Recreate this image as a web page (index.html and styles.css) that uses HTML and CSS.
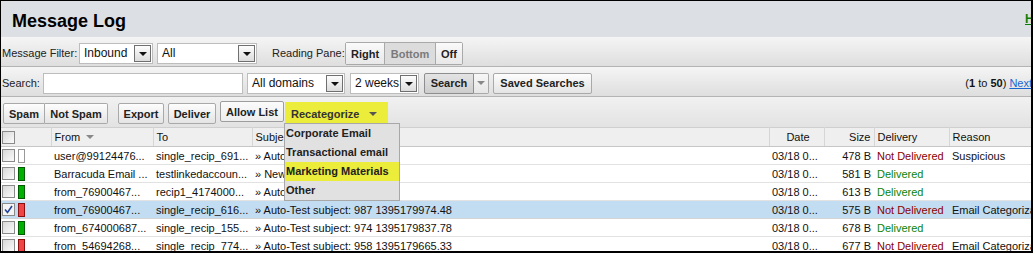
FILE: index.html
```html
<!DOCTYPE html>
<html lang="en">
<head>
    <meta charset="UTF-8">
    <title>Message Log</title>
    <link rel="stylesheet" href="styles.css">
</head>
<body>

<div class="frame">
<div class="page">
    <div class="titlebar">
        <h1>Message Log</h1>
        <a class="help" href="#">Help</a>
    </div>

    <!-- filtro e painel de leitura -->
    <div class="bar">
        <label class="lbl-filter">Message Filter:</label>
        <div class="select w-inbound"><span>Inbound</span><i class="drop"></i></div>
        <div class="select w-all"><span>All</span><i class="drop"></i></div>
        <label class="lbl-pane">Reading Pane:</label>
        <div class="seg">
            <button class="seg-right">Right</button><button class="seg-bottom on">Bottom</button><button class="seg-off">Off</button>
        </div>
    </div>

    <!-- busca -->
    <div class="bar">
        <label class="lbl-search">Search:</label>
        <input class="query" type="text">
        <div class="select w-domains"><span>All domains</span><i class="drop"></i></div>
        <div class="select w-weeks"><span>2 weeks</span><i class="drop"></i></div>
        <div class="split">
            <button class="btn search-btn">Search</button><button class="btn caret"><i></i></button>
        </div>
        <button class="btn saved">Saved Searches</button>
        <div class="paging">(<b>1</b> to <b>50</b>) <a href="#">Next</a></div>
    </div>

    <div class="grid">
        <div class="actions">
            <div class="group">
                <button class="btn b-spam">Spam</button><button class="btn b-notspam">Not Spam</button>
            </div>
            <button class="btn b-export">Export</button>
            <button class="btn b-deliver">Deliver</button>
            <button class="btn b-allow">Allow List</button>
            <button class="recat">Recategorize <i></i></button>
        </div>

        <table class="log">
            <colgroup>
                <col style="width:50px">
                <col style="width:102px">
                <col style="width:99px">
                <col style="width:517px">
                <col style="width:55px">
                <col style="width:50px">
                <col style="width:75px">
                <col style="width:112px">
            </colgroup>
            <thead>
                <tr>
                    <th><span class="chk"></span></th>
                    <th>From <i class="sort"></i></th>
                    <th>To</th>
                    <th>Subject</th>
                    <th class="c-date">Date</th>
                    <th class="c-size">Size</th>
                    <th>Delivery</th>
                    <th>Reason</th>
                </tr>
            </thead>
            <tbody>
                <tr>
                    <td><span class="chk"></span><span class="flag none"></span></td>
                    <td>user@99124476...</td>
                    <td>single_recip_691...</td>
                    <td>» Auto-Test subject</td>
                    <td>03/18 0...</td>
                    <td class="c-size">478 B</td>
                    <td class="bad">Not Delivered</td>
                    <td>Suspicious</td>
                </tr>
                <tr>
                    <td><span class="chk"></span><span class="flag ok"></span></td>
                    <td>Barracuda Email ...</td>
                    <td>testlinkedaccoun...</td>
                    <td>» New account</td>
                    <td>03/18 0...</td>
                    <td class="c-size">581 B</td>
                    <td class="good">Delivered</td>
                    <td></td>
                </tr>
                <tr>
                    <td><span class="chk"></span><span class="flag ok"></span></td>
                    <td>from_76900467...</td>
                    <td>recip1_4174000...</td>
                    <td>» Auto-Test</td>
                    <td>03/18 0...</td>
                    <td class="c-size">613 B</td>
                    <td class="good">Delivered</td>
                    <td></td>
                </tr>
                <tr class="sel">
                    <td><span class="chk on"><svg width="11" height="11" viewBox="0 0 11 11"><path d="M2 5.5 L4.5 8.5 L9 2" fill="none" stroke="#22449a" stroke-width="1.6"/></svg></span><span class="flag no"></span></td>
                    <td>from_76900467...</td>
                    <td>single_recip_616...</td>
                    <td>» Auto-Test subject: 987 1395179974.48</td>
                    <td>03/18 0...</td>
                    <td class="c-size">575 B</td>
                    <td class="bad">Not Delivered</td>
                    <td>Email Categorization</td>
                </tr>
                <tr>
                    <td><span class="chk"></span><span class="flag ok"></span></td>
                    <td>from_674000687...</td>
                    <td>single_recip_155...</td>
                    <td>» Auto-Test subject: 974 1395179837.78</td>
                    <td>03/18 0...</td>
                    <td class="c-size">678 B</td>
                    <td class="good">Delivered</td>
                    <td></td>
                </tr>
                <tr>
                    <td><span class="chk"></span><span class="flag no"></span></td>
                    <td>from_54694268...</td>
                    <td>single_recip_774...</td>
                    <td>» Auto-Test subject: 958 1395179665.33</td>
                    <td>03/18 0...</td>
                    <td class="c-size">677 B</td>
                    <td class="bad">Not Delivered</td>
                    <td>Email Categorization</td>
                </tr>
            </tbody>
        </table>

        <ul class="menu">
            <li>Corporate Email</li>
            <li>Transactional email</li>
            <li class="hot">Marketing Materials</li>
            <li>Other</li>
        </ul>
    </div>
</div>
</div>

</body>
</html>
```

FILE: styles.css
```css
body {
    margin: 0;
    background: #fff;
    font-family: 'Liberation Sans', Arial, sans-serif;
    font-size: 11px;
    color: #111;
}
.frame {
    width: 1033px;
    height: 253px;
    box-sizing: border-box;
    border: solid #000;
    border-width: 1px 2px 2px 1px;
    overflow: hidden;
}
.page {
    width: 1070px;
}

/* barra de titulo */
.titlebar {
    height: 36px;
    background: #dcdfe4;
    display: flex;
    justify-content: space-between;
    align-items: flex-start;
    padding: 0 20px 0 11px;
}
h1 {
    margin: 0;
    padding-top: 10px;
    font-size: 18px;
    line-height: 20px;
    color: #000;
}
.help {
    padding-top: 11px;
    font-size: 12px;
    font-weight: bold;
    color: #0a7d0a;
}

/* barras de filtro e busca */
.bar {
    height: 30px;
    box-sizing: border-box;
    border-bottom: 1px solid #b4b4b4;
    background: linear-gradient(#f5f5f5, #dedede);
    display: flex;
    align-items: center;
    padding: 3px 0 0 1px;
}
label {
    color: #222;
    white-space: nowrap;
}
.lbl-filter { width: 77px; }
.lbl-pane { width: 73px; margin-left: 15px; }
.lbl-search { width: 41px; }

.select {
    height: 21px;
    box-sizing: border-box;
    border: 1px solid #bdbdbd;
    background: #fff;
    display: flex;
    align-items: center;
    justify-content: space-between;
    padding: 0 1px 0 4px;
    font-size: 12px;
    color: #111;
}
.w-inbound { width: 74px; }
.w-all { width: 100px; margin-left: 4px; }
.w-domains { width: 98px; margin-left: 4px; }
.w-weeks { width: 69px; margin-left: 5px; }
.drop {
    width: 17px;
    height: 17px;
    box-sizing: border-box;
    border: 1px solid #6f6f6f;
    background: linear-gradient(#fdfdfd, #dcdcdc);
    display: flex;
    align-items: center;
    justify-content: center;
}
.drop::after {
    content: "";
    border-style: solid;
    border-width: 4px 4px 0 4px;
    border-color: #111 transparent transparent transparent;
    margin-top: 1px;
}

.seg {
    display: flex;
    height: 21px;
    border: 1px solid #a9a9a9;
    border-radius: 2px;
    margin-top: 1px;
}
.seg button {
    font-family: inherit;
    font-size: 11px;
    font-weight: bold;
    color: #222;
    border: none;
    border-left: 1px solid #a9a9a9;
    background: linear-gradient(#fafafa, #e8e8e8);
    padding: 0;
}
.seg button:first-child { border-left: none; }
.seg-right { width: 38px; }
.seg-bottom { width: 51px; }
.seg-off { width: 27px; }
.seg .on {
    background: #dcdcdc;
    color: #7a7a7a;
}

.query {
    width: 200px;
    height: 21px;
    box-sizing: border-box;
    border: 1px solid #bdbdbd;
    margin: 0;
}

.btn {
    height: 21px;
    box-sizing: border-box;
    border: 1px solid #a9a9a9;
    border-radius: 2px;
    background: linear-gradient(#fdfdfd, #e4e4e4);
    font-family: inherit;
    font-size: 11px;
    font-weight: bold;
    color: #222;
    padding: 0;
}
.split {
    display: flex;
    margin-left: 5px;
}
.search-btn {
    width: 50px;
    border-color: #8e8e8e;
    background: linear-gradient(#e4e4e4, #cdcdcd);
    border-radius: 2px 0 0 2px;
}
.caret {
    width: 15px;
    border-left: none;
    border-radius: 0 2px 2px 0;
    background: linear-gradient(#f7f7f7, #e6e6e6);
    display: flex;
    align-items: center;
    justify-content: center;
}
.caret i {
    border-style: solid;
    border-width: 4px 4px 0 4px;
    border-color: #888 transparent transparent transparent;
}
.saved {
    width: 99px;
    margin-left: 4px;
}
.paging {
    margin-left: auto;
    padding-right: 39px;
    font-size: 11px;
    color: #111;
}
.paging a {
    color: #1a66d0;
}

/* acoes */
.grid {
    position: relative;
}
.actions {
    height: 30px;
    box-sizing: border-box;
    background: linear-gradient(#f1f1f1, #e2e2e2);
    display: flex;
    align-items: center;
    padding: 3px 0 0 2px;
}
.group {
    display: flex;
}
.group .btn:first-child { border-radius: 2px 0 0 2px; }
.group .btn:last-child { border-radius: 0 2px 2px 0; border-left: none; }
.b-spam { width: 42px; }
.b-notspam { width: 63px; }
.b-export { width: 46px; margin-left: 10px; }
.b-deliver { width: 48px; margin-left: 4px; }
.b-allow {
    width: 64px;
    margin-left: 4px;
    margin-bottom: 4px;
    background: linear-gradient(#fbfbfb, #ededed);
    border-color: #9d9d9d;
}
.recat {
    width: 103px;
    height: 25px;
    margin: 0 0 0 1px;
    align-self: flex-end;
    border: none;
    background: #ecec3a;
    font-family: inherit;
    font-size: 11px;
    font-weight: bold;
    color: #333;
    text-align: left;
    padding: 0 0 2px 6px;
    display: flex;
    align-items: center;
}
.recat i {
    margin-left: 10px;
    border-style: solid;
    border-width: 4px 4px 0 4px;
    border-color: #555 transparent transparent transparent;
}

/* tabela */
.log {
    border-collapse: collapse;
    table-layout: fixed;
    width: 1060px;
}
.log th {
    height: 19px;
    box-sizing: border-box;
    padding: 0 0 0 3px;
    text-align: left;
    font-weight: normal;
    color: #111;
    background: #efefef;
    border-top: 1px solid #cfcfcf;
    border-bottom: 1px solid #c6c6c6;
    border-right: 1px solid #d6d6d6;
    white-space: nowrap;
}
.log th:first-child { padding-left: 1px; }
.log th.c-date { text-align: center; }
.log th.c-size, .log td.c-size { text-align: right; padding-right: 3px; }
.sort {
    display: inline-block;
    margin-left: 3px;
    vertical-align: 2px;
    border-style: solid;
    border-width: 4px 4px 0 4px;
    border-color: #888 transparent transparent transparent;
}
.log td {
    height: 18px;
    box-sizing: border-box;
    padding: 0 0 0 3px;
    border-bottom: 1px solid #e2e2e2;
    white-space: nowrap;
    overflow: hidden;
    color: #111;
}
.log td:first-child {
    padding-left: 1px;
}
.log .sel td {
    background: #c2dcf1;
    border-bottom-color: #d4d4d4;
}
.chk {
    display: inline-block;
    width: 13px;
    height: 13px;
    box-sizing: border-box;
    border: 1px solid #8a8a8a;
    background: linear-gradient(135deg, #d8d8d8, #fbfbfb);
    vertical-align: middle;
}
.chk svg {
    display: block;
}
.chk.on {
    background: #f4f4f4;
}
.flag {
    display: inline-block;
    width: 7px;
    height: 14px;
    box-sizing: border-box;
    margin-left: 3px;
    vertical-align: middle;
    border: 1px solid #999;
}
.flag.none { background: #fff; }
.flag.ok { background: #00b000; border-color: #005a00; }
.flag.no { background: #f04545; border-color: #8a1010; }
.log td.good { color: #0a840a; }
.log td.bad { color: #8a0000; }

/* menu de recategorizar */
.menu {
    position: absolute;
    left: 283px;
    top: 26px;
    width: 116px;
    margin: 0;
    padding: 0;
    list-style: none;
    box-sizing: border-box;
    background: #e1e1e1;
    border: 1px solid #a8a8a8;
}
.menu li {
    height: 19px;
    line-height: 18px;
    padding-left: 1px;
    font-weight: bold;
    color: #222;
}
.menu li.hot {
    background: #ecec3a;
}
```
